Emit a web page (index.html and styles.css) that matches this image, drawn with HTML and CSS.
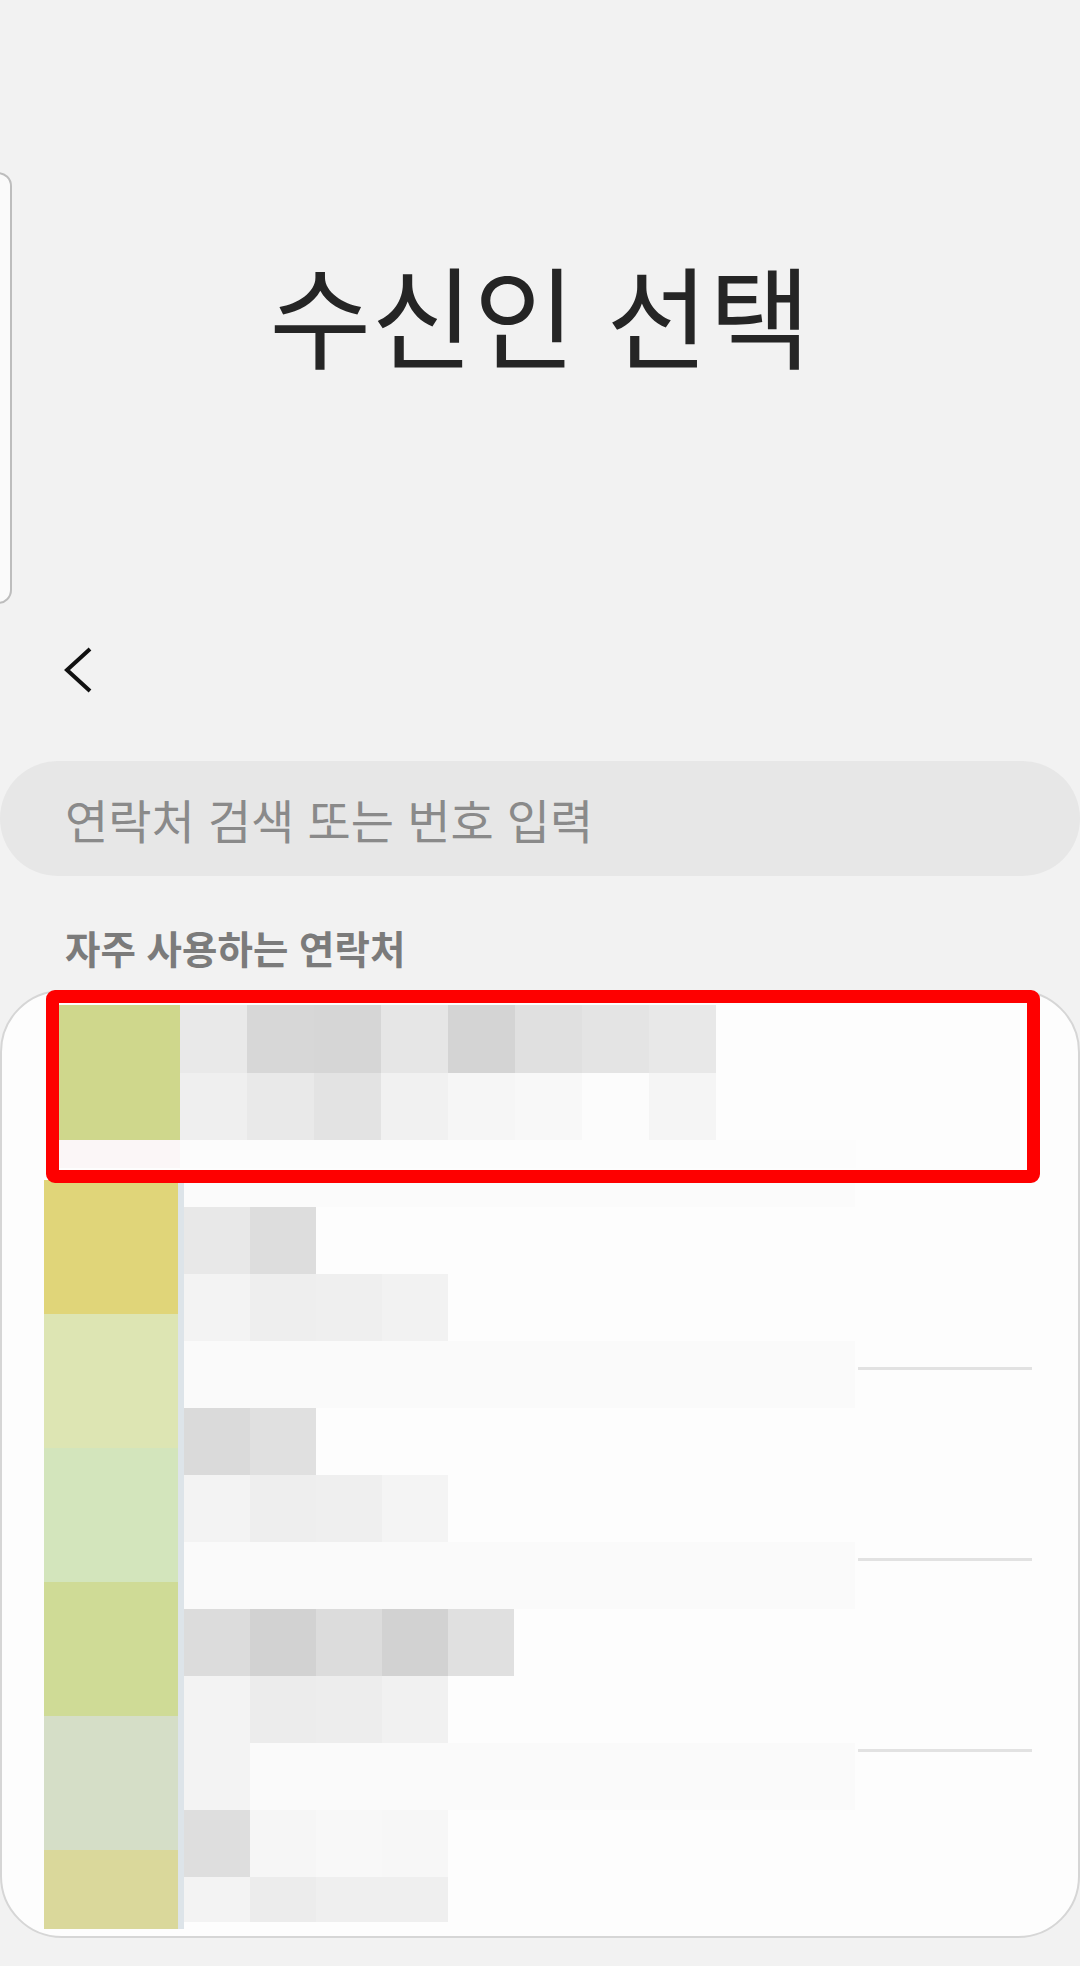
FILE: index.html
```html
<!DOCTYPE html>
<html lang="ko">
<head>
<meta charset="utf-8">
<title>수신인 선택</title>
<link rel="stylesheet" href="styles.css">
</head>
<body>
<div class="edge-panel"></div>
<main class="screen">
  <h1 class="title">수신인 선택</h1>
  <div class="back">
    <svg width="30" height="46" viewBox="0 0 30 46"><polyline points="27,2 4,23 27,44" fill="none" stroke="#111" stroke-width="4"/></svg>
  </div>
  <div class="search">연락처 검색 또는 번호 입력</div>
  <h2 class="section">자주 사용하는 연락처</h2>
  <section class="card">
    <div class="highlight">
      <div class="hl-row">
        <div class="hl-avatar"></div>
        <div class="hl-cells">
          <div class="hrow">
            <i class="hx c-e9"></i><i class="hx c-d7"></i><i class="hx c-d6"></i><i class="hx c-e6"></i><i class="hx c-d4"></i><i class="hx c-e0"></i><i class="hx c-e4"></i><i class="hx c-e8"></i>
          </div>
          <div class="hrow">
            <i class="hx c-ef"></i><i class="hx c-e9"></i><i class="hx c-e3"></i><i class="hx c-f1"></i><i class="hx c-f6"></i><i class="hx c-f8"></i><i class="hx c-fc"></i><i class="hx c-f5"></i>
          </div>
        </div>
      </div>
      <div class="hl-strip"><span class="pink"></span><span class="pale"></span></div>
    </div>

    <div class="list">
      <div class="avcol">
        <div class="av a1"></div>
        <div class="av a2"></div>
        <div class="av a3"></div>
        <div class="av a4"></div>
        <div class="av a5"></div>
        <div class="av a6"></div>
      </div>
      <div class="divline"></div>
      <div class="txtcol">
        <div class="strip"></div>
        <div class="mrow"><div class="cells"><i class="px c-e8"></i><i class="px c-dd"></i></div></div>
        <div class="mrow"><div class="cells"><i class="px c-f3"></i><i class="px c-ee"></i><i class="px c-ef"></i><i class="px c-f2"></i></div></div>
        <div class="mrow"><div class="cells blank"></div><span class="sep s1"></span></div>
        <div class="mrow"><div class="cells"><i class="px c-da"></i><i class="px c-e0"></i></div></div>
        <div class="mrow"><div class="cells"><i class="px c-f3"></i><i class="px c-ee"></i><i class="px c-ef"></i><i class="px c-f4"></i></div></div>
        <div class="mrow"><div class="cells blank"></div><span class="sep s2"></span></div>
        <div class="mrow"><div class="cells"><i class="px c-dc"></i><i class="px c-d2"></i><i class="px c-dc"></i><i class="px c-d2"></i><i class="px c-e0"></i></div></div>
        <div class="mrow"><div class="cells"><i class="px c-f3"></i><i class="px c-ec"></i><i class="px c-ed"></i><i class="px c-f1"></i></div></div>
        <div class="mrow"><div class="cells blank"><i class="px c-f3"></i></div><span class="sep s3"></span></div>
        <div class="mrow"><div class="cells"><i class="px c-de"></i><i class="px c-f6"></i><i class="px c-f8"></i><i class="px c-f7"></i></div></div>
        <div class="mrow last"><div class="cells"><i class="px c-f3"></i><i class="px c-ec"></i><i class="px c-ef"></i><i class="px c-ef"></i></div></div>
      </div>
    </div>
  </section>
</main>
</body>
</html>
```

FILE: styles.css
```css
html, body {
  margin: 0;
  padding: 0;
}
body {
  background: #f2f2f2;
  font-family: "Noto Sans CJK KR", "Noto Sans", sans-serif;
  width: 1080px;
  height: 1966px;
  overflow: hidden;
  position: relative;
}

.edge-panel {
  position: absolute;
  left: -24px;
  top: 172px;
  width: 32px;
  height: 428px;
  border: 2px solid #bdbdbd;
  border-radius: 14px;
  background: #fafafa;
}

.screen {
  padding-top: 250px;
}

.title {
  margin: 0;
  height: 125px;
  font-size: 111px;
  line-height: 125px;
  font-weight: 400;
  text-align: center;
  color: #252525;
}

.back {
  display: block;
  width: 30px;
  height: 46px;
  margin: 272px 0 0 63px;
}
.back svg {
  display: block;
}

.search {
  margin-top: 68px;
  height: 115px;
  border-radius: 58px;
  background: #e7e7e7;
  display: flex;
  align-items: center;
  padding-left: 65px;
  font-size: 47px;
  color: #8a8a8a;
}

.section {
  margin: 49px 0 0 65px;
  font-size: 38.5px;
  line-height: 44px;
  font-weight: 700;
  color: #7b7b7b;
}

.card {
  position: relative;
  margin-top: 21px;
  height: 948px;
  box-sizing: border-box;
  border: 2px solid #d6d6d6;
  border-radius: 62px;
  background: #fdfdfd;
  padding: 188px 0 0 42px;
}

/* red highlight annotation over the first row */
.highlight {
  position: absolute;
  left: 44px;
  top: -2px;
  width: 994px;
  height: 193px;
  box-sizing: border-box;
  border: 13px solid #fe0000;
  border-radius: 9px;
  background: #fdfdfd;
  padding-top: 2px;
}
.hl-row {
  display: flex;
}
.hl-avatar {
  width: 121px;
  height: 135px;
  background: #cfd78c;
  flex: none;
}
.hl-cells {
  display: flex;
  flex-direction: column;
}
.hrow {
  display: flex;
  height: 67.5px;
}
.hx {
  display: block;
  width: 67px;
  height: 100%;
  flex: none;
}
.hl-strip {
  display: flex;
  height: 28px;
}
.hl-strip .pink {
  width: 121px;
  background: #fbf6f7;
}
.hl-strip .pale {
  width: 676px;
  background: #fcfcfc;
}

/* list */
.list {
  display: flex;
  align-items: flex-start;
}
.avcol {
  width: 134px;
  flex: none;
}
.av {
  height: 134px;
}
.av.a6 {
  height: 79px;
}
.a1 { background: #e0d579; }
.a2 { background: #dde5b3; }
.a3 { background: #d3e5bc; }
.a4 { background: #cfdb96; }
.a5 { background: #d5dec7; }
.a6 { background: #dad89b; }

.divline {
  width: 6px;
  height: 749px;
  background: #dde4e9;
  flex: none;
}

.txtcol {
  flex: none;
  width: 860px;
}
.strip {
  height: 27px;
  width: 671px;
  background: #fbfbfb;
}
.mrow {
  display: flex;
  height: 67px;
}
.mrow.last {
  height: 45px;
}
.cells {
  display: flex;
  width: 671px;
  margin-right: 3px;
  flex: none;
}
.cells.blank {
  background: #fafafa;
}
.px {
  display: block;
  width: 66px;
  height: 100%;
  flex: none;
}
.sep {
  display: block;
  width: 174px;
  height: 3px;
  background: #e2e2e2;
  flex: none;
}
.sep.s1 { margin-top: 26px; }
.sep.s2 { margin-top: 16px; }
.sep.s3 { margin-top: 6px; }

/* mosaic shades */
.c-d2 { background: #d2d2d2; }
.c-d4 { background: #d4d4d4; }
.c-d6 { background: #d6d6d6; }
.c-d7 { background: #d7d7d7; }
.c-da { background: #dadada; }
.c-dc { background: #dcdcdc; }
.c-dd { background: #dddddd; }
.c-de { background: #dedede; }
.c-e0 { background: #e0e0e0; }
.c-e3 { background: #e3e3e3; }
.c-e4 { background: #e4e4e4; }
.c-e6 { background: #e6e6e6; }
.c-e8 { background: #e8e8e8; }
.c-e9 { background: #e9e9e9; }
.c-ec { background: #ececec; }
.c-ed { background: #ededed; }
.c-ee { background: #eeeeee; }
.c-ef { background: #efefef; }
.c-f1 { background: #f1f1f1; }
.c-f2 { background: #f2f2f2; }
.c-f3 { background: #f3f3f3; }
.c-f4 { background: #f4f4f4; }
.c-f5 { background: #f5f5f5; }
.c-f6 { background: #f6f6f6; }
.c-f7 { background: #f7f7f7; }
.c-f8 { background: #f8f8f8; }
.c-fc { background: #fcfcfc; }
```
